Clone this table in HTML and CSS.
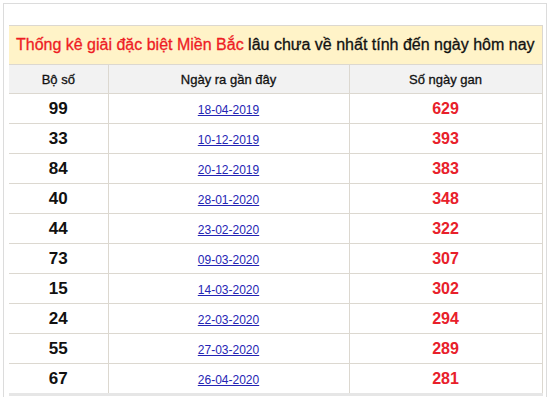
FILE: index.html
```html
<!DOCTYPE html>
<html lang="vi">
<head>
<meta charset="utf-8">
<title>Thống kê giải đặc biệt</title>
<link rel="stylesheet" href="styles.css">
</head>
<body>
<div class="box">
  <table class="gan">
    <colgroup>
      <col class="c1">
      <col class="c2">
      <col class="c3">
    </colgroup>
    <thead>
      <tr class="title-row">
        <th colspan="3"><span class="red">Thống kê giải đặc biệt Miền Bắc</span> lâu chưa về nhất tính đến ngày hôm nay</th>
      </tr>
      <tr class="head-row">
        <th>Bộ số</th>
        <th>Ngày ra gần đây</th>
        <th>Số ngày gan</th>
      </tr>
    </thead>
    <tbody>
      <tr><td class="num">99</td><td><a href="#">18-04-2019</a></td><td class="days">629</td></tr>
      <tr><td class="num">33</td><td><a href="#">10-12-2019</a></td><td class="days">393</td></tr>
      <tr><td class="num">84</td><td><a href="#">20-12-2019</a></td><td class="days">383</td></tr>
      <tr><td class="num">40</td><td><a href="#">28-01-2020</a></td><td class="days">348</td></tr>
      <tr><td class="num">44</td><td><a href="#">23-02-2020</a></td><td class="days">322</td></tr>
      <tr><td class="num">73</td><td><a href="#">09-03-2020</a></td><td class="days">307</td></tr>
      <tr><td class="num">15</td><td><a href="#">14-03-2020</a></td><td class="days">302</td></tr>
      <tr><td class="num">24</td><td><a href="#">22-03-2020</a></td><td class="days">294</td></tr>
      <tr><td class="num">55</td><td><a href="#">27-03-2020</a></td><td class="days">289</td></tr>
      <tr><td class="num">67</td><td><a href="#">26-04-2020</a></td><td class="days">281</td></tr>
    </tbody>
  </table>
</div>
</body>
</html>
```
FILE: styles.css
```css
html, body {
  margin: 0;
  padding: 0;
  background: #ffffff;
  overflow: hidden;
}
body {
  font-family: "Liberation Sans", Arial, sans-serif;
  color: #111;
}
.box {
  margin: 3px 3px 0 3px;
  border: 1px solid #dcdcdc;
  border-bottom: none;
  padding: 21px 5px 0 5px;
  height: 394px;
  box-sizing: border-box;
}
.gan {
  width: 533px;
  border-collapse: collapse;
  table-layout: fixed;
  border-bottom: 3px solid #e6e6e6;
}
.c1 { width: 99px; }
.c2 { width: 241px; }
.c3 { width: 193px; }
.gan th, .gan td {
  border-right: 1px solid #dcd8d0;
  border-bottom: 1px solid #dcd8d0;
  text-align: center;
  padding: 0;
}
.title-row th {
  background: #fff3c8;
  border-top: 1px solid #dcd8d0;
  height: 38px;
  font-size: 16px;
  font-weight: normal;
  color: #111;
  white-space: nowrap;
  -webkit-text-stroke: 0.3px currentColor;
}
.red {
  color: #ee1c24;
}
.head-row th {
  background: #f2f2f2;
  height: 28px;
  font-size: 13px;
  font-weight: normal;
  color: #111;
  -webkit-text-stroke: 0.3px currentColor;
}
.gan td {
  height: 29px;
}
.num {
  font-size: 17px;
  font-weight: bold;
  color: #111;
}
.gan a {
  font-size: 12px;
  color: #2424b4;
  text-decoration: underline;
}
.days {
  font-size: 16px;
  font-weight: bold;
  color: #e8202a;
}
```
